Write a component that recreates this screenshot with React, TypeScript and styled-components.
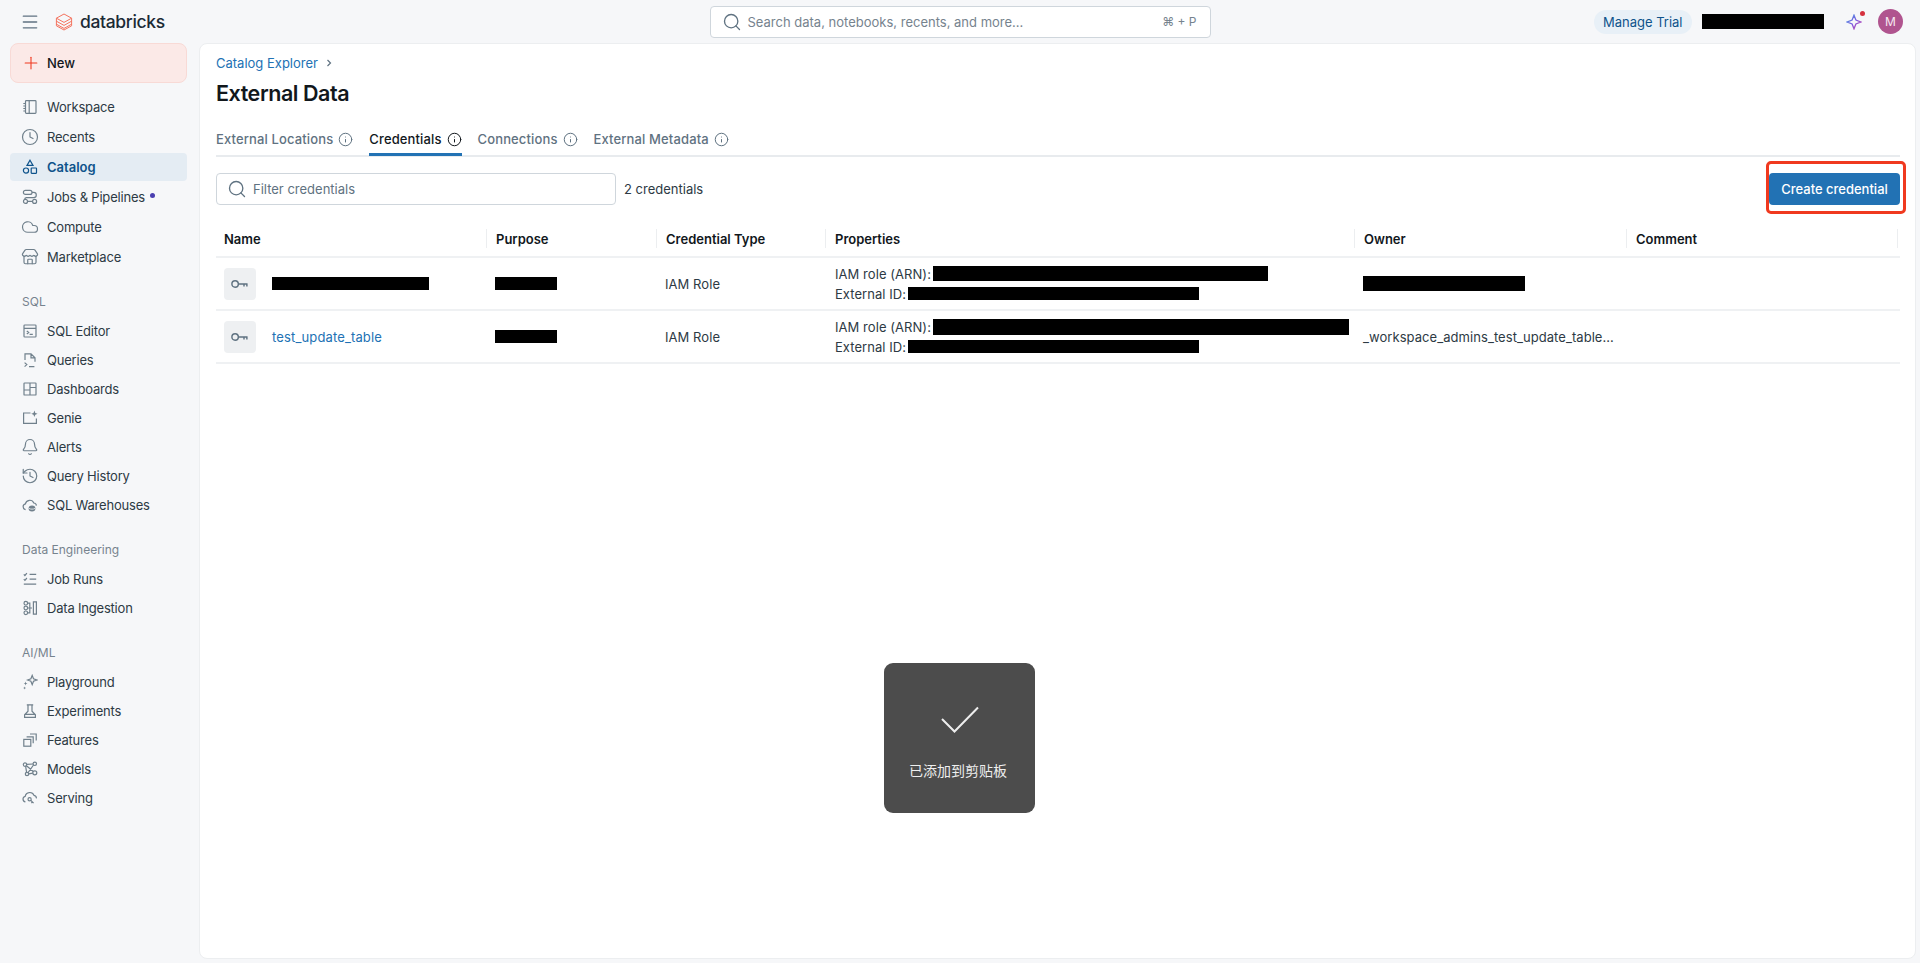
import React, { ReactNode } from 'react';
import styled, { createGlobalStyle } from 'styled-components';
import { Bell, Clock, Cloud, History, Info, Menu, Plus, Search, Store } from 'lucide-react';

const GlobalStyle = createGlobalStyle`
  html, body {
    margin: 0;
    padding: 0;
    height: 100%;
    overflow: hidden;
    background: #f6f7f9;
    font-family: Inter, "Liberation Sans", "Noto Sans CJK SC", sans-serif;
    font-size: 13px;
    color: #11171c;
  }
  * { box-sizing: border-box; }
`;

const Page = styled.div`
  display: flex;
  flex-direction: column;
  height: 100vh;
  background: #f6f7f9;
`;

const Topbar = styled.header`
  display: grid;
  grid-template-columns: 1fr 501px 1fr;
  align-items: center;
  height: 43px;
  flex: none;
`;

const TopLeft = styled.div`
  display: flex;
  align-items: center;
  padding-left: 20px;
  color: #5f7281;
`;

const Logo = styled.div`
  display: flex;
  align-items: center;
  gap: 7px;
  margin-left: 15px;
`;

const Wordmark = styled.span`
  font-size: 17.5px;
  font-weight: 500;
  letter-spacing: -0.35px;
  color: #1b2a35;
`;

const GlobalSearch = styled.div`
  display: flex;
  align-items: center;
  height: 32px;
  padding: 0 13px 0 11px;
  gap: 6px;
  background: #fff;
  border: 1px solid #cfd6dc;
  border-radius: 4px;
  color: #5f7281;
`;

const SearchHint = styled.span`
  flex: 1;
  color: #76838e;
`;

const Shortcut = styled.span`
  color: #76838e;
  font-size: 12px;
`;

const TopRight = styled.div`
  display: flex;
  align-items: center;
  justify-content: flex-end;
  padding-right: 17px;
`;

const TrialPill = styled.span`
  display: flex;
  align-items: center;
  height: 24px;
  padding: 0 9px;
  border-radius: 12px;
  background: #e8f0f7;
  color: #0e538b;
  white-space: nowrap;
`;

const Redaction = styled.span<{ $w: number; $h: number }>`
  display: inline-block;
  flex: none;
  width: ${p => p.$w}px;
  height: ${p => p.$h}px;
  background: #000;
`;

const TopRedaction = styled(Redaction)`
  margin: 0 22.5px 0 10px;
`;

const Assistant = styled.span`
  display: flex;
  position: relative;
  width: 16px;
  height: 16px;
  margin-right: 16px;
`;

const AssistantDot = styled.span`
  position: absolute;
  top: -3px;
  right: -3px;
  width: 5px;
  height: 5px;
  border-radius: 50%;
  background: #d5323f;
`;

const Avatar = styled.span`
  display: flex;
  align-items: center;
  justify-content: center;
  width: 25px;
  height: 25px;
  border-radius: 50%;
  background: #b0548f;
  color: #f6e9f1;
  font-size: 12px;
`;

const Body = styled.div`
  display: flex;
  flex: 1;
  min-height: 0;
`;

const Sidebar = styled.nav`
  width: 199px;
  flex: none;
  padding: 0 12px 0 10px;
`;

const NewButton = styled.button`
  display: flex;
  align-items: center;
  gap: 6px;
  width: 100%;
  height: 40px;
  padding: 0 10px;
  margin-bottom: 10px;
  font: inherit;
  font-weight: 500;
  color: #11171c;
  background: #fbe9e7;
  border: 1px solid #f8dad6;
  border-radius: 8px;
`;

const NavGroup = styled.div`
  display: flex;
  flex-direction: column;
  gap: 2px;
`;

const NavSection = styled.section`
  margin-top: 24px;

  &:first-of-type {
    margin-top: 23px;
  }
`;

const NavLabel = styled.div`
  height: 16px;
  line-height: 16px;
  margin: 0 0 7px 12px;
  font-size: 12px;
  color: #76838e;
`;

const NavRow = styled.a<{ $active?: boolean; $compact?: boolean }>`
  display: flex;
  align-items: center;
  gap: 9px;
  height: ${p => (p.$compact ? 27 : 28)}px;
  padding-left: 12px;
  border-radius: 4px;
  letter-spacing: ${p => (p.$active ? 0 : -0.2)}px;
  color: ${p => (p.$active ? '#0e538b' : '#2d3a44')};
  font-weight: ${p => (p.$active ? 600 : 400)};
  background: ${p => (p.$active ? '#e4ecf3' : 'transparent')};
`;

const NavIconSlot = styled.span<{ $active?: boolean }>`
  display: flex;
  flex: none;
  align-items: center;
  justify-content: center;
  width: 16px;
  height: 16px;
  color: ${p => (p.$active ? '#0e538b' : '#70808c')};

  svg {
    flex: none;
  }
`;

const UnreadDot = styled.span`
  width: 5px;
  height: 5px;
  margin-left: -4px;
  margin-bottom: 4px;
  border-radius: 50%;
  background: #4a3fb0;
`;

const Panel = styled.main`
  flex: 1;
  min-width: 0;
  margin: 0 4px 4px 0;
  padding: 9px 15px 0 16px;
  background: #fff;
  border: 1px solid #eceef0;
  border-radius: 8px;
`;

const Breadcrumb = styled.div`
  display: flex;
  align-items: center;
  gap: 7px;
  height: 20px;
  color: #2272b4;

  svg {
    color: #5f7281;
  }
`;

const Title = styled.h1`
  margin: 6px 0 0;
  font-size: 21.5px;
  line-height: 28px;
  font-weight: 600;
  letter-spacing: -0.45px;
  color: #11171c;
`;

const Tabs = styled.div`
  display: flex;
  gap: 16px;
  height: 34px;
  margin-top: 16px;
  border-bottom: 2px solid #e8ebee;
`;

const Tab = styled.div<{ $active?: boolean }>`
  display: flex;
  align-items: center;
  gap: 5px;
  height: 33px;
  font-weight: 500;
  letter-spacing: 0.13px;
  color: ${p => (p.$active ? '#11171c' : '#5f7281')};
  border-bottom: 3px solid ${p => (p.$active ? '#2272b4' : 'transparent')};
  padding-top: 2px;

  svg {
    color: ${p => (p.$active ? '#11171c' : '#5f7281')};
  }
`;

const Toolbar = styled.div`
  display: flex;
  align-items: center;
  height: 32px;
  margin-top: 16px;
`;

const FilterBox = styled.div`
  display: flex;
  align-items: center;
  gap: 6px;
  width: 400px;
  height: 32px;
  padding: 0 10px;
  border: 1px solid #cfd6dc;
  border-radius: 4px;
  color: #5f7281;
`;

const CountText = styled.span`
  margin-left: 8px;
  color: #2d3a44;
  flex: 1;
`;

const CreateWrap = styled.div`
  position: relative;
`;

const CreateButton = styled.button`
  display: block;
  width: 131px;
  height: 32px;
  padding: 0;
  font: inherit;
  font-weight: 500;
  color: #fff;
  background: #2272b4;
  border: none;
  border-radius: 4px;
`;

const Highlight = styled.span`
  position: absolute;
  inset: -12px -6px -9px -3px;
  border: 3px solid #f0391f;
  border-radius: 5px;
  pointer-events: none;
`;

const columns = '270px 170px 169px 529px 272px 274px';

const HeaderRow = styled.div`
  display: grid;
  grid-template-columns: ${columns};
  align-items: center;
  height: 36px;
  margin-top: 17px;
  padding-bottom: 1px;
  border-bottom: 2px solid #eff1f3;
`;

const HeaderCell = styled.div`
  display: flex;
  align-items: center;
  height: 19px;
  padding-left: 9px;
  font-weight: 600;
  color: #11171c;
  border-left: 1px solid #eceef0;

  &:first-child {
    padding-left: 8px;
    border-left: none;
  }

  &:last-child {
    margin-right: 2px;
    border-right: 1px solid #eceef0;
  }
`;

const Row = styled.div`
  display: grid;
  grid-template-columns: ${columns};
  align-items: center;
  height: 53px;
  border-bottom: 2px solid #eff1f3;
`;

const Cell = styled.div`
  display: flex;
  align-items: center;
  padding-left: 9px;
  min-width: 0;
  letter-spacing: 0.06px;
  color: #2d3a44;
  white-space: nowrap;
`;

const NameCell = styled(Cell)`
  gap: 16px;
  padding-left: 8px;
`;

const KeyTile = styled.span`
  display: flex;
  align-items: center;
  justify-content: center;
  width: 32px;
  height: 32px;
  border-radius: 4px;
  background: #eef0f2;
  color: #5f7281;
`;

const NameLink = styled.a`
  letter-spacing: 0.14px;
  color: #2272b4;
`;

const PropsCell = styled(Cell)`
  flex-direction: column;
  align-items: flex-start;
  padding-left: 10px;
`;

const PropLine = styled.div`
  display: flex;
  align-items: center;
  gap: 2px;
  height: 20px;
`;

const Toast = styled.div`
  position: fixed;
  left: 884px;
  top: 663px;
  display: flex;
  flex-direction: column;
  align-items: center;
  width: 151px;
  height: 150px;
  padding-top: 42px;
  border-radius: 9px;
  background: #4c4c4c;
  color: #eeeeee;
`;

const ToastText = styled.div`
  margin: 25px 3px 0 0;
  font-family: "Noto Sans CJK SC", sans-serif;
  font-size: 14px;
  line-height: 20px;
`;

const Glyph = ({ children }: { children: ReactNode }) => (
  <svg width="16" height="16" viewBox="0 0 16 16" fill="none" stroke="currentColor" strokeWidth="1.2">
    {children}
  </svg>
);

const WorkspaceIcon = () => (
  <Glyph>
    <rect x="3.5" y="1.6" width="10.5" height="12.8" rx="0.8" />
    <path d="M7.2 1.8v12.4M1.3 4.5h2.2M1.3 7h2.2M1.3 9.5h2.2M1.3 12h2.2" />
  </Glyph>
);

const CatalogIcon = () => (
  <Glyph>
    <path d="M8 1.2l3 5.2H5z" />
    <circle cx="4" cy="11.6" r="2.6" />
    <rect x="9.2" y="9" width="5.3" height="5.3" rx="0.5" />
  </Glyph>
);

const JobsIcon = () => (
  <Glyph>
    <rect x="1.4" y="1.4" width="8.6" height="4" rx="2" />
    <circle cx="3.5" cy="12.4" r="2" />
    <circle cx="12.6" cy="12.4" r="2" />
    <path d="M10 3.4h1.7a2.6 2.6 0 0 1 0 5.2H4.3a2 2 0 0 0-1.6 2M5.5 12.4h5.1" />
  </Glyph>
);

const SqlEditorIcon = () => (
  <Glyph>
    <rect x="2" y="2" width="12" height="12" rx="0.8" />
    <path d="M2 5.4h12M4.8 8l1.9 1.5L4.8 11M7.6 11.4h3.2" />
  </Glyph>
);

const QueriesIcon = () => (
  <Glyph>
    <path d="M3 8V1.8h6l4 4v4M9 1.8v4h4" />
    <path d="M2.6 10.6l2.2 2-2.2 2M7 14.6h5.4" />
  </Glyph>
);

const DashboardIcon = () => (
  <Glyph>
    <rect x="2" y="2" width="12" height="12" rx="0.6" />
    <path d="M8 2v12M2 9h6M8 6.5h6" />
  </Glyph>
);

const GenieIcon = () => (
  <Glyph>
    <path d="M8.5 3H1.6v10.4h12.8V8.6" />
    <path d="M12.4.6l.9 2.3 2.3.9-2.3.9-.9 2.3-.9-2.3-2.3-.9 2.3-.9z" fill="currentColor" stroke="none" />
  </Glyph>
);

const WarehouseIcon = () => (
  <Glyph>
    <path d="M3.6 12.6a2.9 2.9 0 0 1-.2-5.7 4.4 4.4 0 0 1 8.4-.9 2.9 2.9 0 0 1 2.6 2.6" />
    <ellipse cx="10" cy="11.6" rx="3.4" ry="3" fill="currentColor" stroke="none" />
    <path d="M7 11.4c1.5 1 4.5 1 6 0" stroke="#f6f7f9" strokeWidth="0.8" />
  </Glyph>
);

const JobRunsIcon = () => (
  <Glyph>
    <path d="M1.8 3.4l1.1 1.1 2-2.3M7.6 3.4h6.6M1.8 8.2l1.1 1.1 2-2.3M7.6 8.2h6.6M1.8 13.2h12.4" />
  </Glyph>
);

const IngestionIcon = () => (
  <Glyph>
    <circle cx="3.8" cy="3.2" r="1.8" />
    <circle cx="3.8" cy="8" r="1.8" />
    <circle cx="3.8" cy="12.8" r="1.8" />
    <path d="M5.6 3.2h2.2v9.6H5.6M5.6 8h4.4M11.4 1.8h3v12.4h-3V1.8z" />
  </Glyph>
);

const PlaygroundIcon = () => (
  <Glyph>
    <path d="M10.2 1.4l1.3 3.3 3.3 1.3-3.3 1.3-1.3 3.3-1.3-3.3-3.3-1.3 3.3-1.3z" />
    <path d="M3.6 7.6l.5 1.4 1.4.5-1.4.5-.5 1.4-.5-1.4-1.4-.5 1.4-.5zM2.6 12.6l.4 1 1 .4-1 .4-.4 1-.4-1-1-.4 1-.4z" fill="currentColor" stroke="none" />
  </Glyph>
);

const FlaskIcon = () => (
  <Glyph>
    <path d="M4.8 1.8h6.4M6 1.8v6.4l-3.4 3.6v2.6h10.8v-2.6L10 8.2V1.8M3 11.4h10" />
  </Glyph>
);

const FeaturesIcon = () => (
  <Glyph>
    <rect x="1.8" y="7.4" width="7" height="6.8" />
    <path d="M4.6 4.8h6.6v6.4M8 2h6.2v6.4" />
  </Glyph>
);

const ModelsIcon = () => (
  <Glyph>
    <circle cx="3" cy="3.6" r="1.7" />
    <circle cx="12.8" cy="2.8" r="1.7" />
    <circle cx="5" cy="13" r="1.7" />
    <circle cx="12.8" cy="11.8" r="2" />
    <path d="M4.6 3.4l6.5-.4M3.6 5.2l1 6.1M11.5 4l-5.4 7.7M4.5 4.8l6.8 5.7M6.7 12.9l4.1-.8" />
  </Glyph>
);

const ServingIcon = () => (
  <Glyph>
    <path d="M3.4 11.8a2.8 2.8 0 0 1-.2-5.5 4.6 4.6 0 0 1 8.8-.9 2.9 2.9 0 0 1 2.4 3" />
    <circle cx="7.6" cy="9.2" r="1.6" />
    <path d="M8.8 10.4l2.8 2.8M10.4 12l-1 1" />
  </Glyph>
);

const KeyIcon = () => (
  <svg width="20" height="20" viewBox="0 0 18 18" fill="none" stroke="currentColor" strokeWidth="1.3">
    <circle cx="4.6" cy="9" r="2.9" />
    <path d="M7.5 9h8.3M12.6 9v2.2M15.2 9v2.2" />
  </svg>
);

const LogoMark = () => (
  <svg width="18" height="18" viewBox="0 0 18 18" fill="none" stroke="#f4735f" strokeWidth="1">
    <path d="M9 1l7.6 4.2L9 9.4 1.4 5.2z" />
    <path d="M1.4 8.2L9 12.4l7.6-4.2" />
    <path d="M1.4 11.2L9 15.4l7.6-4.2" />
    <path d="M1.4 5.2v7.600L9 17l7.600-4.200V5.200" />
  </svg>
);

const SparkleMark = () => (
  <svg width="16" height="16" viewBox="0 0 16 16" fill="none" strokeWidth="1.3">
    <defs>
      <linearGradient id="assistant" x1="0" y1="0" x2="1" y2="1">
        <stop offset="0" stopColor="#4299e0" />
        <stop offset="0.5" stopColor="#7c5ce0" />
        <stop offset="1" stopColor="#ca42a8" />
      </linearGradient>
    </defs>
    <path d="M8 1.2l1.9 4.9 4.9 1.9-4.9 1.9L8 14.8l-1.9-4.9L1.2 8l4.9-1.9z" stroke="url(#assistant)" />
  </svg>
);

const ChevronMark = () => (
  <svg width="8" height="10" viewBox="0 0 8 10" fill="none" stroke="currentColor" strokeWidth="1.2">
    <path d="M2.5 2l3 3-3 3" />
  </svg>
);

type NavEntry = { label: string; icon: ReactNode; active?: boolean; unread?: boolean };

const lucide = { size: 18, strokeWidth: 1.6 };

const primaryNav: NavEntry[] = [
  { label: 'Workspace', icon: <WorkspaceIcon /> },
  { label: 'Recents', icon: <Clock {...lucide} /> },
  { label: 'Catalog', icon: <CatalogIcon />, active: true },
  { label: 'Jobs & Pipelines', icon: <JobsIcon />, unread: true },
  { label: 'Compute', icon: <Cloud {...lucide} /> },
  { label: 'Marketplace', icon: <Store {...lucide} /> },
];

const navSections: { title: string; items: NavEntry[] }[] = [
  {
    title: 'SQL',
    items: [
      { label: 'SQL Editor', icon: <SqlEditorIcon /> },
      { label: 'Queries', icon: <QueriesIcon /> },
      { label: 'Dashboards', icon: <DashboardIcon /> },
      { label: 'Genie', icon: <GenieIcon /> },
      { label: 'Alerts', icon: <Bell {...lucide} /> },
      { label: 'Query History', icon: <History {...lucide} /> },
      { label: 'SQL Warehouses', icon: <WarehouseIcon /> },
    ],
  },
  {
    title: 'Data Engineering',
    items: [
      { label: 'Job Runs', icon: <JobRunsIcon /> },
      { label: 'Data Ingestion', icon: <IngestionIcon /> },
    ],
  },
  {
    title: 'AI/ML',
    items: [
      { label: 'Playground', icon: <PlaygroundIcon /> },
      { label: 'Experiments', icon: <FlaskIcon /> },
      { label: 'Features', icon: <FeaturesIcon /> },
      { label: 'Models', icon: <ModelsIcon /> },
      { label: 'Serving', icon: <ServingIcon /> },
    ],
  },
];

const tabs = [
  { label: 'External Locations' },
  { label: 'Credentials', active: true },
  { label: 'Connections' },
  { label: 'External Metadata' },
];

const headers = ['Name', 'Purpose', 'Credential Type', 'Properties', 'Owner', 'Comment'];

const NavLink = ({ item, compact }: { item: NavEntry; compact?: boolean }) => (
  <NavRow $active={item.active} $compact={compact}>
    <NavIconSlot $active={item.active}>{item.icon}</NavIconSlot>
    {item.label}
    {item.unread && <UnreadDot />}
  </NavRow>
);

export default function App() {
  return (
    <Page>
      <GlobalStyle />
      <Topbar>
        <TopLeft>
          <Menu size={20} strokeWidth={1.6} />
          <Logo>
            <LogoMark />
            <Wordmark>databricks</Wordmark>
          </Logo>
        </TopLeft>
        <GlobalSearch>
          <Search size={20} strokeWidth={1.6} />
          <SearchHint>Search data, notebooks, recents, and more...</SearchHint>
          <Shortcut>⌘ + P</Shortcut>
        </GlobalSearch>
        <TopRight>
          <TrialPill>Manage Trial</TrialPill>
          <TopRedaction $w={122} $h={15} />
          <Assistant>
            <SparkleMark />
            <AssistantDot />
          </Assistant>
          <Avatar>M</Avatar>
        </TopRight>
      </Topbar>
      <Body>
        <Sidebar>
          <NewButton>
            <Plus size={20} strokeWidth={1.3} color="#f0391f" />
            New
          </NewButton>
          <NavGroup>
            {primaryNav.map(item => (
              <NavLink key={item.label} item={item} />
            ))}
          </NavGroup>
          {navSections.map(section => (
            <NavSection key={section.title}>
              <NavLabel>{section.title}</NavLabel>
              <NavGroup>
                {section.items.map(item => (
                  <NavLink key={item.label} item={item} compact />
                ))}
              </NavGroup>
            </NavSection>
          ))}
        </Sidebar>
        <Panel>
          <Breadcrumb>
            Catalog Explorer
            <ChevronMark />
          </Breadcrumb>
          <Title>External Data</Title>
          <Tabs>
            {tabs.map(tab => (
              <Tab key={tab.label} $active={tab.active}>
                {tab.label}
                <Info size={15} strokeWidth={1.6} />
              </Tab>
            ))}
          </Tabs>
          <Toolbar>
            <FilterBox>
              <Search size={20} strokeWidth={1.6} />
              Filter credentials
            </FilterBox>
            <CountText>2 credentials</CountText>
            <CreateWrap>
              <CreateButton>Create credential</CreateButton>
              <Highlight />
            </CreateWrap>
          </Toolbar>
          <HeaderRow>
            {headers.map(header => (
              <HeaderCell key={header}>{header}</HeaderCell>
            ))}
          </HeaderRow>
          <Row>
            <NameCell>
              <KeyTile>
                <KeyIcon />
              </KeyTile>
              <Redaction $w={157} $h={13} />
            </NameCell>
            <Cell>
              <Redaction $w={62} $h={13} />
            </Cell>
            <Cell>IAM Role</Cell>
            <PropsCell>
              <PropLine>
                IAM role (ARN):
                <Redaction $w={335} $h={15} />
              </PropLine>
              <PropLine>
                External ID:
                <Redaction $w={291} $h={13} />
              </PropLine>
            </PropsCell>
            <Cell>
              <Redaction $w={162} $h={15} />
            </Cell>
            <Cell />
          </Row>
          <Row>
            <NameCell>
              <KeyTile>
                <KeyIcon />
              </KeyTile>
              <NameLink>test_update_table</NameLink>
            </NameCell>
            <Cell>
              <Redaction $w={62} $h={13} />
            </Cell>
            <Cell>IAM Role</Cell>
            <PropsCell>
              <PropLine>
                IAM role (ARN):
                <Redaction $w={416} $h={16} />
              </PropLine>
              <PropLine>
                External ID:
                <Redaction $w={291} $h={13} />
              </PropLine>
            </PropsCell>
            <Cell>_workspace_admins_test_update_table...</Cell>
            <Cell />
          </Row>
        </Panel>
      </Body>
      <Toast>
        <svg width="40" height="30" viewBox="0 0 40 30" fill="none" stroke="#eeeeee" strokeWidth="2">
          <path d="M2 14l12.5 12.5L38 2.5" />
        </svg>
        <ToastText>已添加到剪贴板</ToastText>
      </Toast>
    </Page>
  );
}
